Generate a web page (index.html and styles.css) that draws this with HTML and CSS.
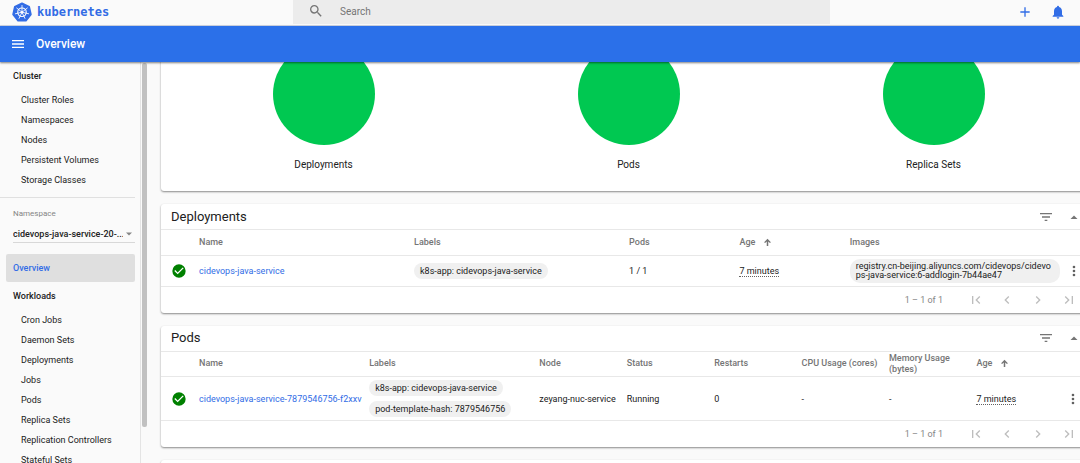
FILE: index.html
```html
<!DOCTYPE html>
<html lang="en">
<head>
<meta charset="utf-8">
<title>Kubernetes Dashboard - Overview</title>
<link rel="stylesheet" href="styles.css">
</head>
<body>
<svg class="sprite" aria-hidden="true">
  <symbol id="filter" viewBox="0 0 24 24"><path d="M10 18h4v-2h-4v2zM3 6v2h18V6H3zm3 7h12v-2H6v2z"/></symbol>
  <symbol id="up" viewBox="0 0 24 24"><path d="M5 16l7-7 7 7z"/></symbol>
  <symbol id="down" viewBox="0 0 24 24"><path d="M6 9l6 6 6-6z"/></symbol>
  <symbol id="arrow" viewBox="0 0 24 24"><path d="M10 21V9L5.500 13.500 3 11l9-9 9 9-2.500 2.500L14 9v12z"/></symbol>
  <symbol id="ok" viewBox="0 0 24 24"><path d="M12 2a10 10 0 1 0 0 20 10 10 0 0 0 0-20zm-2 15l-5-5 1.410-1.410L10 14.170l7.590-7.590L19 8z"/></symbol>
  <symbol id="dots" viewBox="0 0 24 24"><path d="M12 8a2 2 0 1 0 0-4 2 2 0 0 0 0 4zm0 2a2 2 0 1 0 0 4 2 2 0 0 0 0-4zm0 6a2 2 0 1 0 0 4 2 2 0 0 0 0-4z"/></symbol>
  <symbol id="first" viewBox="0 0 24 24"><path d="M18.410 16.590L13.820 12l4.590-4.590L17 6l-6 6 6 6zM6 6h2v12H6z"/></symbol>
  <symbol id="prev" viewBox="0 0 24 24"><path d="M15.410 7.410L14 6l-6 6 6 6 1.410-1.410L10.830 12z"/></symbol>
  <symbol id="next" viewBox="0 0 24 24"><path d="M10 6L8.590 7.410 13.170 12l-4.580 4.590L10 18l6-6z"/></symbol>
  <symbol id="last" viewBox="0 0 24 24"><path d="M5.590 7.410L10.180 12l-4.590 4.590L7 18l6-6-6-6zM16 6h2v12h-2z"/></symbol>
</svg>

<header class="topbar">
  <a class="brand" href="#">
    <svg class="brand-logo" viewBox="0 0 40 40" aria-hidden="true">
      <path fill="#326ce5" stroke="#326ce5" stroke-width="3" stroke-linejoin="round" d="M20 2.500L34.500 9.500 38 25 28 37.500H12L2 25 5.500 9.500z"/>
      <g fill="none" stroke="#fff" stroke-linecap="round">
        <circle cx="20" cy="20.500" r="8.500" stroke-width="2.200"/>
        <path stroke-width="1.700" d="M20 20.500V7M20 20.500L30.600 12.100M20 20.500L33.200 23.500M20 20.500L25.900 32.700M20 20.500L14.100 32.700M20 20.500L6.800 23.500M20 20.500L9.400 12.100"/>
      </g>
      <circle cx="20" cy="20.500" r="2.500" fill="#fff"/>
    </svg>
    <span class="brand-name">kubernetes</span>
  </a>
  <label class="search">
    <svg class="icon-md" viewBox="0 0 24 24" aria-hidden="true"><path d="M15.500 14h-.79l-.28-.27A6.470 6.470 0 0 0 16 9.500 6.500 6.500 0 1 0 9.500 16c1.610 0 3.090-.59 4.230-1.570l.27.28v.79l5 4.990L20.490 19l-4.990-5zm-6 0C7.010 14 5 11.990 5 9.500S7.010 5 9.500 5 14 7.010 14 9.500 11.990 14 9.500 14z"/></svg>
    <input class="search-input" type="text" placeholder="Search" aria-label="Search">
  </label>
  <div class="top-actions">
    <button class="icon-btn" aria-label="Create"><svg class="icon-md" viewBox="0 0 24 24"><path d="M19 13h-6v6h-2v-6H5v-2h6V5h2v6h6z"/></svg></button>
    <button class="icon-btn" aria-label="Notifications"><svg class="icon-md" viewBox="0 0 24 24"><path d="M12 22a2 2 0 0 0 2-2h-4a2 2 0 0 0 2 2zm6-6v-5c0-3.070-1.640-5.640-4.500-6.320V4a1.500 1.500 0 0 0-3 0v.68C7.630 5.360 6 7.920 6 11v5l-2 2v1h16v-1z"/></svg></button>
  </div>
</header>

<div class="titlebar">
  <button class="icon-btn" aria-label="Toggle menu"><svg class="icon-md" viewBox="0 0 24 24"><path d="M3 18h18v-2H3v2zm0-5h18v-2H3v2zm0-7v2h18V6H3z"/></svg></button>
  <h1 class="title">Overview</h1>
</div>

<div class="layout">
  <nav class="sidebar">
    <div class="side-content">
      <a class="group" href="#">Cluster</a>
      <a class="item" href="#">Cluster Roles</a>
      <a class="item" href="#">Namespaces</a>
      <a class="item" href="#">Nodes</a>
      <a class="item" href="#">Persistent Volumes</a>
      <a class="item" href="#">Storage Classes</a>
      <div class="namespace">
        <label class="ns-label" for="ns">Namespace</label>
        <div class="ns-box">
          <select id="ns" class="ns-select"><option>cidevops-java-service-20-...</option></select>
          <svg class="icon-sm" aria-hidden="true"><use href="#down"/></svg>
        </div>
      </div>
      <a class="group active" href="#">Overview</a>
      <a class="group" href="#">Workloads</a>
      <a class="item" href="#">Cron Jobs</a>
      <a class="item" href="#">Daemon Sets</a>
      <a class="item" href="#">Deployments</a>
      <a class="item" href="#">Jobs</a>
      <a class="item" href="#">Pods</a>
      <a class="item" href="#">Replica Sets</a>
      <a class="item" href="#">Replication Controllers</a>
      <a class="item" href="#">Stateful Sets</a>
    </div>
    <div class="scrollbar"><div class="thumb"></div></div>
  </nav>

  <main class="main">
    <section class="card charts">
      <figure class="chart"><div class="pie"></div><figcaption>Deployments</figcaption></figure>
      <figure class="chart"><div class="pie"></div><figcaption>Pods</figcaption></figure>
      <figure class="chart"><div class="pie"></div><figcaption>Replica Sets</figcaption></figure>
    </section>

    <section class="card">
      <div class="card-head">
        <h2 class="card-title">Deployments</h2>
        <button class="icon-btn" aria-label="Filter"><svg class="icon-md"><use href="#filter"/></svg></button>
        <button class="icon-btn" aria-label="Collapse"><svg class="icon-sm"><use href="#up"/></svg></button>
      </div>
      <table class="table">
        <colgroup><col class="c-status"><col class="c-wide"><col class="c-wide"><col class="c-mid"><col class="c-mid"><col class="c-wide"><col></colgroup>
        <thead><tr><th></th><th>Name</th><th>Labels</th><th>Pods</th><th><span class="sorted">Age<svg class="icon-sort"><use href="#arrow"/></svg></span></th><th>Images</th><th></th></tr></thead>
        <tbody><tr class="row-single">
          <td class="status"><svg class="icon-md"><use href="#ok"/></svg></td>
          <td><a class="link" href="#">cidevops-java-service</a></td>
          <td><span class="chip">k8s-app: cidevops-java-service</span></td>
          <td>1 / 1</td>
          <td><span class="age">7 minutes</span></td>
          <td><span class="chip chip-image">registry.cn-beijing.aliyuncs.com/cidevops/cidevops-java-service:6-addlogin-7b44ae47</span></td>
          <td class="more"><button class="icon-btn" aria-label="Actions"><svg class="icon-md"><use href="#dots"/></svg></button></td>
        </tr></tbody>
      </table>
      <div class="pager">
        <span class="range">1 – 1 of 1</span>
        <button class="icon-btn" aria-label="First page"><svg class="icon-md"><use href="#first"/></svg></button>
        <button class="icon-btn" aria-label="Previous page"><svg class="icon-md"><use href="#prev"/></svg></button>
        <button class="icon-btn" aria-label="Next page"><svg class="icon-md"><use href="#next"/></svg></button>
        <button class="icon-btn" aria-label="Last page"><svg class="icon-md"><use href="#last"/></svg></button>
      </div>
    </section>

    <section class="card">
      <div class="card-head">
        <h2 class="card-title">Pods</h2>
        <button class="icon-btn" aria-label="Filter"><svg class="icon-md"><use href="#filter"/></svg></button>
        <button class="icon-btn" aria-label="Collapse"><svg class="icon-sm"><use href="#up"/></svg></button>
      </div>
      <table class="table">
        <colgroup><col class="c-status"><col class="c-pod"><col class="c-pod"><col class="c-small"><col class="c-small"><col class="c-small"><col class="c-small"><col class="c-small"><col class="c-small"><col></colgroup>
        <thead><tr><th></th><th>Name</th><th>Labels</th><th>Node</th><th>Status</th><th>Restarts</th><th>CPU Usage (cores)</th><th>Memory Usage (bytes)</th><th><span class="sorted">Age<svg class="icon-sort"><use href="#arrow"/></svg></span></th><th></th></tr></thead>
        <tbody><tr class="row-double">
          <td class="status"><svg class="icon-md"><use href="#ok"/></svg></td>
          <td><a class="link" href="#">cidevops-java-service-7879546756-f2xxv</a></td>
          <td><div class="chips"><span class="chip">k8s-app: cidevops-java-service</span><span class="chip">pod-template-hash: 7879546756</span></div></td>
          <td>zeyang-nuc-service</td>
          <td>Running</td>
          <td>0</td>
          <td>-</td>
          <td>-</td>
          <td><span class="age">7 minutes</span></td>
          <td class="more"><button class="icon-btn" aria-label="Actions"><svg class="icon-md"><use href="#dots"/></svg></button></td>
        </tr></tbody>
      </table>
      <div class="pager">
        <span class="range">1 – 1 of 1</span>
        <button class="icon-btn" aria-label="First page"><svg class="icon-md"><use href="#first"/></svg></button>
        <button class="icon-btn" aria-label="Previous page"><svg class="icon-md"><use href="#prev"/></svg></button>
        <button class="icon-btn" aria-label="Next page"><svg class="icon-md"><use href="#next"/></svg></button>
        <button class="icon-btn" aria-label="Last page"><svg class="icon-md"><use href="#last"/></svg></button>
      </div>
    </section>

    <section class="card card-next"></section>
  </main>
</div>
</body>
</html>
```
FILE: styles.css
```css
* {
  box-sizing: border-box;
}

html,
body {
  height: 100%;
}

body {
  margin: 0;
  display: flex;
  flex-direction: column;
  overflow: hidden;
  background: #fafafa;
  color: #212121;
  font-family: Roboto, sans-serif;
  font-size: 9px;
  line-height: 12px;
}

a {
  color: inherit;
  text-decoration: none;
}

svg {
  display: block;
  flex: none;
  fill: currentColor;
}

.sprite {
  position: absolute;
  width: 0;
  height: 0;
}

.icon-sm { width: 12px; height: 12px; }
.icon-md { width: 16px; height: 16px; }
.icon-sort { width: 9px; height: 9px; }

.icon-btn {
  display: block;
  padding: 0;
  border: 0;
  background: none;
  color: inherit;
}

/* Top bar */
.topbar {
  flex: none;
  display: grid;
  grid-template-columns: 293px 1fr 250px;
  height: 26px;
  border-bottom: 1px solid #d0d6e4;
}

.brand {
  display: flex;
  align-items: center;
  gap: 5px;
  padding: 0 0 2px 12px;
}

.brand-logo {
  width: 20px;
  height: 20px;
}

.brand-name {
  color: #326ce5;
  font: bold 12px "DejaVu Sans Mono", monospace;
}

.search {
  display: flex;
  align-items: center;
  gap: 16px;
  height: 24px;
  padding: 0 15px 2px;
  background: #ececec;
  color: #757575;
}

.search-input {
  flex: 1;
  min-width: 0;
  padding: 0;
  border: 0;
  background: none;
  font: 10px Roboto, sans-serif;
}

.search-input::placeholder {
  color: #757575;
}

.top-actions {
  display: flex;
  justify-content: flex-end;
  align-items: center;
  gap: 17px;
  padding: 0 14px 2px 0;
  color: #326de6;
}

.titlebar {
  flex: none;
  position: relative;
  z-index: 1;
  display: flex;
  align-items: center;
  gap: 10px;
  height: 36px;
  padding: 0 10px;
  background: #2b70e9;
  color: #fff;
  box-shadow: 0 1px 2px rgba(0, 0, 0, 0.5);
}

.title {
  margin: 0;
  font-size: 12px;
  font-weight: 500;
}

/* Sidebar */
.layout {
  flex: 1;
  min-height: 0;
  display: flex;
}

.sidebar {
  flex: none;
  display: flex;
  width: 148px;
  overflow: hidden;
}

.side-content {
  flex: 1;
  min-width: 0;
  border-right: 1px solid #e4e4e4;
}

.group,
.item {
  display: flex;
  align-items: center;
  white-space: nowrap;
}

.group {
  height: 28px;
  padding-left: 13px;
  font-weight: 500;
}

.item {
  height: 20px;
  padding-left: 21px;
}

.namespace {
  margin: 7px 5px 11px 0;
  padding: 10px 0 0 13px;
  border-top: 1px solid #e0e0e0;
}

.ns-label {
  display: block;
  color: #858585;
  font-size: 8px;
}

.ns-box {
  display: flex;
  align-items: center;
  height: 23px;
  padding-top: 6px;
  border-bottom: 1px solid #d8d8d8;
  color: #858585;
}

.ns-select {
  flex: 1;
  min-width: 0;
  padding: 0;
  border: 0;
  appearance: none;
  background: none;
  color: #212121;
  font: 500 9px Roboto, sans-serif;
}

.active {
  margin: 0 5px 0 6px;
  padding-left: 7px;
  border-radius: 2px;
  background: #dfdfdf;
  color: #326de6;
}

.scrollbar {
  flex: none;
  width: 7px;
  padding: 1px 1px 0;
}

.thumb {
  height: 364px;
  border-radius: 2px;
  background: #c1c1c1;
}

/* Cards; the workspace runs past the right edge of the window */
.main {
  flex: 1;
  min-width: 0;
  display: flex;
  flex-direction: column;
  gap: 13px;
  padding-left: 13px;
  overflow: hidden;
}

.card {
  flex: none;
  margin-right: -16px;
  border-radius: 3px;
  background: #fff;
  box-shadow: 0 1px 2px rgba(0, 0, 0, 0.45);
}

.charts {
  display: flex;
  margin-top: -24px;
  padding: 5px 10px 20px;
}

.chart {
  flex: 1;
  display: flex;
  flex-direction: column;
  align-items: center;
  gap: 14px;
  margin: 0;
  font-size: 10px;
}

.pie {
  width: 102px;
  height: 102px;
  border-radius: 50%;
  background: #00c851;
}

.card-head {
  display: flex;
  align-items: center;
  gap: 14px;
  height: 26px;
  padding: 0 16px 0 10px;
  border-bottom: 1px solid #e8e8e8;
  color: #757575;
}

.card-title {
  flex: 1;
  margin: 0;
  color: #212121;
  font-size: 13px;
  font-weight: 400;
}

.table {
  width: 100%;
  table-layout: fixed;
  border-collapse: collapse;
}

.c-status { width: 38px; }
.c-wide { width: 23%; }
.c-mid { width: 11.8%; }
.c-pod { width: 18.2%; }
.c-small { width: 9.35%; }

th,
td {
  padding: 0;
  border-bottom: 1px solid #e8e8e8;
  text-align: left;
  white-space: nowrap;
}

th {
  height: 25px;
  color: #757575;
  font-weight: 500;
  line-height: 11px;
  white-space: normal;
}

.row-single { height: 31px; }
.row-double { height: 44px; }

.status {
  padding-left: 10px;
  color: #008000;
}

.link { color: #326de6; }

.sorted {
  display: flex;
  align-items: center;
  gap: 8px;
}

.chips {
  display: flex;
  flex-direction: column;
  align-items: flex-start;
  gap: 5px;
}

.chip {
  display: inline-block;
  padding: 2px 6px;
  border-radius: 8px;
  background: #f0f0f0;
  vertical-align: middle;
}

.chip-image {
  width: 210px;
  padding: 3px 6px;
  border-radius: 10px;
  line-height: 9px;
  white-space: normal;
  word-break: break-all;
}

.age { border-bottom: 1px dotted #616161; }

.more {
  padding-left: 1px;
  color: #616161;
}

.pager {
  display: flex;
  align-items: center;
  justify-content: flex-end;
  gap: 15px;
  height: 26px;
  padding-right: 19px;
  color: #bdbdbd;
}

.range {
  margin-right: 10px;
  color: #858585;
}

.card-next { height: 60px; }
```
